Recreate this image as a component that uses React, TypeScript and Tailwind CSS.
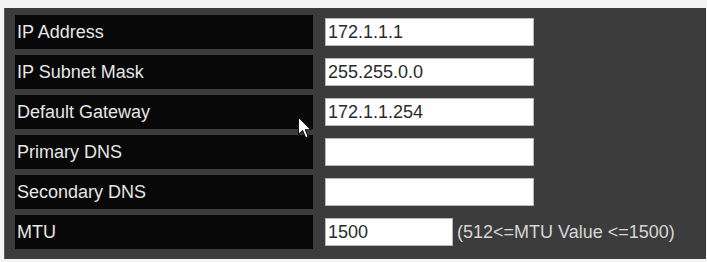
import React from "react";

const rows: { label: string; value: string; short?: boolean; hint?: string }[] = [
  { label: "IP Address", value: "172.1.1.1" },
  { label: "IP Subnet Mask", value: "255.255.0.0" },
  { label: "Default Gateway", value: "172.1.1.254" },
  { label: "Primary DNS", value: "" },
  { label: "Secondary DNS", value: "" },
  { label: "MTU", value: "1500", short: true, hint: "(512<=MTU Value <=1500)" },
];

function Pointer() {
  return (
    <svg
      className="absolute left-[297px] top-[116px]"
      width="16"
      height="24"
      viewBox="0 0 14 22"
    >
      <path
        d="M1 1 L1 17 L4.8 13.4 L7.6 20 L10 19 L7.3 12.6 L12.5 12.6 Z"
        fill="#ffffff"
        stroke="#111111"
        strokeWidth="1"
        strokeLinejoin="round"
      />
    </svg>
  );
}

export default function App() {
  return (
    <div className="relative w-[707px] h-[262px] bg-[#f4f4f4] pt-[8px] pl-[4px] font-['Liberation_Sans',Arial,sans-serif]">
      <div className="w-[702px] h-[251px] bg-[#3c3c3c] border-l border-[#5a5a5a] pt-[7px] pl-[10px] flex flex-col gap-[6px]">
        {rows.map((r) => (
          <div key={r.label} className="flex items-center h-[34px]">
            <div className="w-[298px] h-full bg-[#080808] text-[#e6e6e6] text-[18px] leading-[34px] pl-[2px]">
              {r.label}
            </div>
            <input
              readOnly
              value={r.value}
              className={`ml-[12px] h-[28px] ${
                r.short ? "w-[128px]" : "w-[209px]"
              } bg-white border border-[#b8b8b8] text-[18px] text-[#2a2a2a] pl-[2px] outline-none`}
            />
            {r.hint && (
              <span className="ml-[4px] text-[18px] text-[#d6d6d6]">
                {r.hint}
              </span>
            )}
          </div>
        ))}
      </div>
      <Pointer />
    </div>
  );
}
